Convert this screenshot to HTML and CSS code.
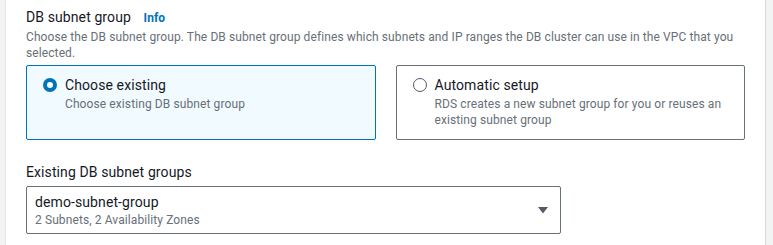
FILE: index.html
```html
<!DOCTYPE html>
<html lang="en">
<head>
    <meta charset="UTF-8">
    <meta name="viewport" content="width=device-width, initial-scale=1.0">
    <title>DB subnet group</title>
    <link rel="stylesheet" href="styles.css">
</head>
<body>
    <div class="page">
        <div class="section">
            <div class="field-title">
                <span class="label">DB subnet group</span>
                <a href="#" class="info">Info</a>
            </div>
            <p class="description">Choose the DB subnet group. The DB subnet group defines which subnets and IP ranges the DB cluster can use in the VPC that you selected.</p>

            <div class="tiles">
                <label class="tile selected">
                    <span class="radio checked"></span>
                    <span class="tile-text">
                        <span class="tile-title">Choose existing</span>
                        <span class="tile-desc">Choose existing DB subnet group</span>
                    </span>
                </label>
                <label class="tile">
                    <span class="radio"></span>
                    <span class="tile-text">
                        <span class="tile-title">Automatic setup</span>
                        <span class="tile-desc">RDS creates a new subnet group for you or reuses an existing subnet group</span>
                    </span>
                </label>
            </div>

            <div class="select-field">
                <div class="select-label">Existing DB subnet groups</div>
                <div class="select-box">
                    <div class="select-value">
                        <span class="option-name">demo-subnet-group</span>
                        <span class="option-desc">2 Subnets, 2 Availability Zones</span>
                    </div>
                    <svg class="caret" width="12" height="8" viewBox="0 0 12 8">
                        <polygon points="1,1 11,1 6,7.5" fill="#545b64"/>
                    </svg>
                </div>
            </div>
        </div>
    </div>
</body>
</html>
```

FILE: styles.css
```css
body {
    margin: 0;
    padding: 0;
    background: #f2f3f3;
    font-family: Roboto, 'Open Sans', sans-serif;
    letter-spacing: 0.1px;
    color: #16191f;
}
.page {
    margin: 0 7px 0 5px;
    background: #ffffff;
    border-left: 1px solid #e4e6e6;
    border-right: 1px solid #d5dbdb;
    height: 245px;
}
.section {
    padding: 6px 20px 0 20px;
}
.field-title {
    font-size: 14px;
    line-height: 22px;
}
.info {
    margin-left: 9px;
    font-size: 12px;
    font-weight: bold;
    color: #0073bb;
    text-decoration: none;
}
.description {
    margin: 0;
    font-size: 12px;
    line-height: 16px;
    color: #687078;
}
.tiles {
    display: flex;
    gap: 20px;
    margin-top: 4px;
}
.tile {
    flex: 1;
    display: flex;
    align-items: flex-start;
    gap: 8px;
    padding: 8px 16px 11px 16px;
    border: 1px solid #687078;
    border-radius: 2px;
    background: #ffffff;
}
.tile.selected {
    border-color: #0073bb;
    background: #f1faff;
}
.radio {
    flex: none;
    box-sizing: border-box;
    width: 14px;
    height: 14px;
    margin-top: 4px;
    border: 1.5px solid #545b64;
    border-radius: 50%;
    background: #ffffff;
}
.radio.checked {
    border: 4px solid #0073bb;
}
.tile-text {
    display: flex;
    flex-direction: column;
}
.tile-title {
    font-size: 14px;
    line-height: 22px;
}
.tile-desc {
    font-size: 12px;
    line-height: 16px;
    color: #687078;
}
.select-field {
    margin-top: 21px;
}
.select-label {
    font-size: 14px;
    line-height: 22px;
    margin-bottom: 3px;
}
.select-box {
    width: 535px;
    height: 48px;
    box-sizing: border-box;
    display: flex;
    align-items: center;
    justify-content: space-between;
    padding: 0 11px 0 8px;
    border: 1px solid #687078;
    border-radius: 2px;
}
.select-value {
    display: flex;
    flex-direction: column;
}
.option-name {
    font-size: 14px;
    line-height: 20px;
}
.option-desc {
    font-size: 12px;
    line-height: 16px;
    color: #687078;
}
```
